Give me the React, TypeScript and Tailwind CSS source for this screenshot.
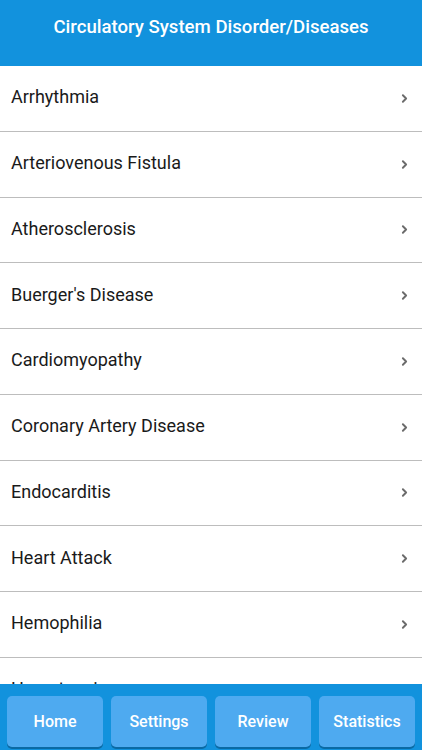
import { ChevronRight } from "lucide-react";

const diseases = [
  "Arrhythmia",
  "Arteriovenous Fistula",
  "Atherosclerosis",
  "Buerger's Disease",
  "Cardiomyopathy",
  "Coronary Artery Disease",
  "Endocarditis",
  "Heart Attack",
  "Hemophilia",
  "Hypertension",
];

const tabs = ["Home", "Settings", "Review", "Statistics"];

export default function App() {
  return (
    <div
      className="relative h-[750px] w-[422px] overflow-hidden bg-white"
      style={{ fontFamily: "Roboto, 'Liberation Sans', sans-serif" }}
    >
      <div className="flex h-[66px] items-start justify-center bg-[#1292dd] pt-[14px]">
        <h1 className="text-[18.6px] font-medium text-white">Circulatory System Disorder/Diseases</h1>
      </div>

      <ul>
        {diseases.map((name) => (
          <li
            key={name}
            className="flex h-[65.75px] items-center justify-between border-b border-[#bdbdbd] pb-[3px] pl-[11px] pr-[11px]"
          >
            <span className="text-[18px] text-[#1a1a1a]">{name}</span>
            <ChevronRight className="mt-[3px] h-[13px] w-[13px] text-[#6b6b6b]" strokeWidth={3.5} />
          </li>
        ))}
      </ul>

      <div className="absolute bottom-0 left-0 right-0 flex h-[66px] gap-[8px] bg-[#1292dd] px-[7px] pb-[3px] pt-[12px]">
        {tabs.map((t) => (
          <button
            key={t}
            className="flex flex-1 items-center justify-center rounded-[5px] bg-[#4eaaf0] text-[16px] font-medium text-white shadow-[0_2px_0_#0a6aa5]"
          >
            {t}
          </button>
        ))}
      </div>
    </div>
  );
}
